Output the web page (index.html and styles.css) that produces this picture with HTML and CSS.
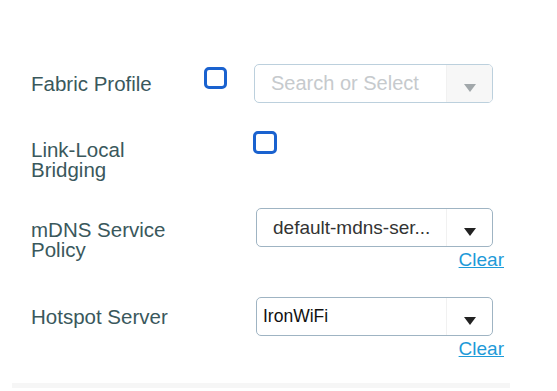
FILE: index.html
```html
<!DOCTYPE html>
<html lang="en">
<head>
  <meta charset="UTF-8" />
  <meta name="viewport" content="width=device-width, initial-scale=1.0" />
  <title>Policy Settings</title>
  <link rel="stylesheet" href="styles.css">
</head>
<body>
  <form class="settings">
    <div class="row">
      <label class="label">Fabric Profile</label>
      <span class="checkbox checkbox-inline"></span>
      <div class="control">
        <div class="select select-empty">
          <span class="select-value placeholder">Search or Select</span>
          <span class="select-arrow"><span class="caret"></span></span>
        </div>
      </div>
    </div>

    <div class="row row-tall">
      <label class="label label-wide">Link-Local Bridging</label>
      <div class="control">
        <span class="checkbox"></span>
      </div>
    </div>

    <div class="row row-clear">
      <label class="label label-wide label-low">mDNS Service Policy</label>
      <div class="control">
        <div class="select">
          <span class="select-value">default-mdns-ser...</span>
          <span class="select-arrow"><span class="caret dark"></span></span>
        </div>
        <a href="#" class="clear">Clear</a>
      </div>
    </div>

    <div class="row row-last">
      <label class="label label-wide">Hotspot Server</label>
      <div class="control">
        <div class="select">
          <span class="select-value native">IronWiFi</span>
          <span class="select-arrow"><span class="caret dark"></span></span>
        </div>
        <a href="#" class="clear">Clear</a>
      </div>
    </div>
  </form>
  <div class="footer-bar"></div>
</body>
</html>
```

FILE: styles.css
```css
* {
  box-sizing: border-box;
}
body {
  margin: 0;
  font-family: 'Liberation Sans', Arial, sans-serif;
  background: #ffffff;
  color: #39575b;
}
.settings {
  padding: 64px 0 0 31px;
}
.row {
  display: grid;
  grid-template-columns: 173px 49px 251px;
  align-items: start;
  margin-bottom: 28px;
}
.row-clear {
  margin-bottom: 26px;
}
.row-last {
  margin-bottom: 0;
}
.label {
  font-size: 20.5px;
  line-height: 20px;
  padding-top: 10px;
  color: #3a585c;
}
.label-wide {
  grid-column: 1 / 3;
  width: 150px;
}
.row-tall .label {
  padding-top: 9px;
}
.label-low {
  padding-top: 12px;
}
.control {
  grid-column: 3;
  display: flex;
  flex-direction: column;
}
.checkbox {
  display: block;
  width: 24px;
  height: 23px;
  border: 3px solid #1a62cf;
  border-radius: 5px;
  background: #fff;
}
.checkbox-inline {
  width: 23px;
  height: 22px;
  margin-top: 3px;
}
.select {
  display: flex;
  width: 239px;
  height: 39px;
  border: 1px solid #9fb4c3;
  border-radius: 5px;
  overflow: hidden;
  background: #fff;
}
.select-empty {
  border-color: #bcd0dd;
  margin-left: 1px;
}
.row-clear .select,
.row-last .select {
  margin-left: 3px;
  width: 237px;
}
.select-value {
  flex: 1;
  display: flex;
  align-items: center;
  padding-left: 16px;
  font-size: 19px;
  color: #333;
  white-space: nowrap;
}
.placeholder {
  font-size: 20px;
  color: #c6cacd;
}
.native {
  padding-left: 6px;
  font-size: 17.5px;
  color: #111;
}
.select-arrow {
  width: 46px;
  display: flex;
  align-items: center;
  justify-content: center;
  border-left: 1px solid #f1f1f1;
  padding-top: 8px;
}
.select-empty .select-arrow {
  background: #f7f7f7;
}
.caret {
  width: 0;
  height: 0;
  border-left: 6px solid transparent;
  border-right: 6px solid transparent;
  border-top: 8px solid #a2a8ab;
}
.caret.dark {
  border-top-color: #222;
}
.clear {
  align-self: flex-end;
  margin-top: 2px;
  font-size: 19px;
  line-height: 22px;
  color: #1e9ad8;
  text-decoration: underline;
}
.footer-bar {
  margin: 23px 0 0 12px;
  width: 498px;
  height: 5px;
  background: #f6f6f6;
}
```
